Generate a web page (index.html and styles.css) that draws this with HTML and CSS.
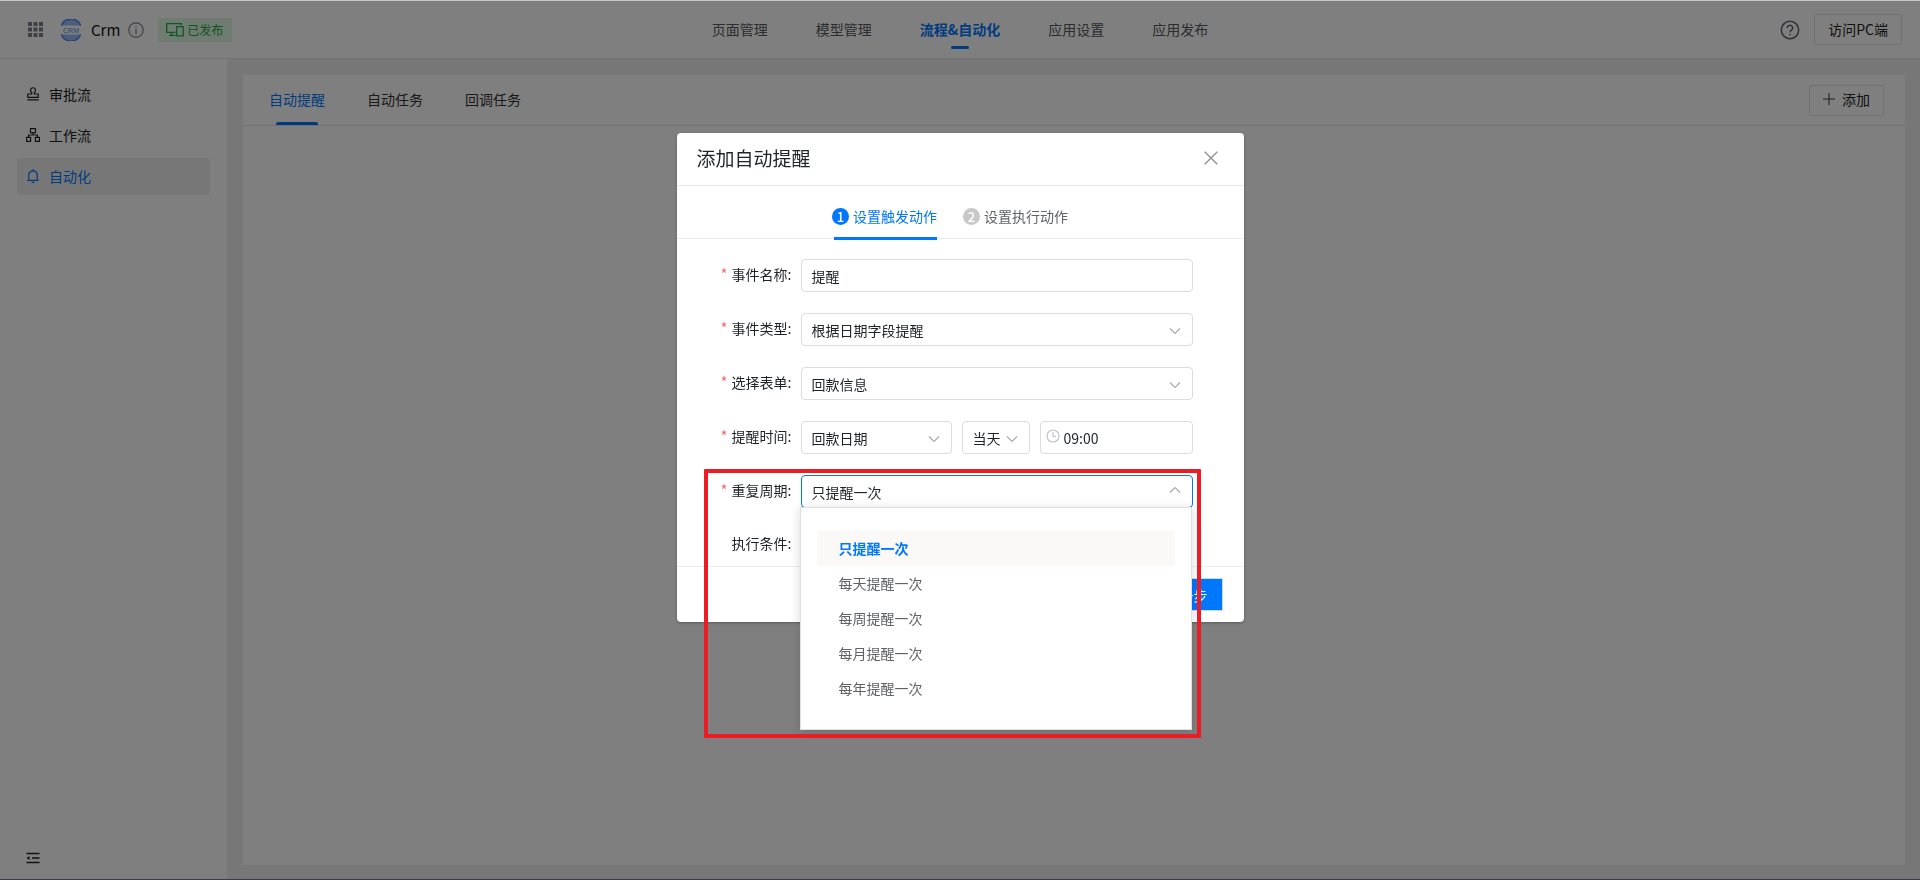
FILE: index.html
```html
<!DOCTYPE html>
<html lang="zh-CN">
<head>
<meta charset="utf-8">
<title>Crm</title>
<link rel="stylesheet" href="styles.css">
</head>
<body>
<div class="app">
  <header class="topbar">
    <div class="topbar-left">
      <button class="icon-btn apps" aria-label="应用">
        <svg width="15" height="15" viewBox="0 0 15 15" fill="#7b818c"><path d="M0 0h4v4H0zM5.500 0h4v4h-4zM11 0h4v4h-4zM0 5.500h4v4H0zM5.500 5.500h4v4h-4zM11 5.500h4v4h-4zM0 11h4v4H0zM5.500 11h4v4h-4zM11 11h4v4h-4z"/></svg>
      </button>
      <svg class="logo" width="22" height="22" viewBox="0 0 22 22"><path d="M1.500 6.500a10.500 10.500 0 0 1 19 0zM1.500 15.500a10.500 10.500 0 0 0 19 0z" fill="#9dbcf5"/><path d="M1.300 6.500a10.500 10.500 0 0 1 19.400 0M1.300 15.500a10.500 10.500 0 0 0 19.400 0" fill="none" stroke="#4a86ee" stroke-width="1.500"/><text class="logo-text" x="11" y="13.500" text-anchor="middle">CRM</text></svg>
      <span class="app-name">Crm</span>
      <svg class="info" width="16" height="16" viewBox="0 0 16 16" fill="none" stroke="#7a7f88" stroke-width="1.200"><circle cx="8" cy="8" r="7.200"/><path d="M8 7v5M8 4.200v1.300"/></svg>
      <span class="badge">
        <svg width="18" height="14" viewBox="0 0 18 14" fill="none" stroke="#1fb046" stroke-width="1.300"><path d="M9.500 9.300H.7V.7h14.600v1.800M5.500 9.500v2.800M3 12.400h6.500M10.700 3.700h6.500v9.200h-6.500z"/></svg>已发布
      </span>
    </div>
    <nav class="main-nav">
      <a href="#">页面管理</a>
      <a href="#">模型管理</a>
      <a href="#" class="active">流程&amp;自动化</a>
      <a href="#">应用设置</a>
      <a href="#">应用发布</a>
    </nav>
    <div class="topbar-right">
      <button class="icon-btn" aria-label="帮助">
        <svg width="20" height="20" viewBox="0 0 20 20" fill="none" stroke="#5f646d" stroke-width="1.500"><circle cx="10" cy="10" r="8.700"/><path d="M7.300 8a2.700 2.700 0 1 1 4.200 2.200C10.400 10.900 10 11.200 10 12.300M10 13.700v1.500"/></svg>
      </button>
      <button class="btn">访问PC端</button>
    </div>
  </header>
  <div class="body">
    <aside class="sidebar">
      <nav class="side-nav">
        <a href="#"><svg width="14" height="14" viewBox="0 0 14 14" fill="none" stroke="#222" stroke-width="1.200"><path d="M5.700 7V5.400a2.500 2.500 0 1 1 2.600 0V7h3.900v3.300H1.800V7zM1.300 12.900h11.400"/></svg>审批流</a>
        <a href="#"><svg width="14" height="14" viewBox="0 0 14 14" fill="none" stroke="#222" stroke-width="1.200"><path d="M4.500.6h5v4h-5zM.6 9.400h4v4h-4zM9.400 9.400h4v4h-4zM7 4.600V7M2.600 9.400V7h8.800v2.400"/></svg>工作流</a>
        <a href="#" class="active"><svg width="14" height="14" viewBox="0 0 14 14" fill="none" stroke="#0077ff" stroke-width="1.200"><path d="M1.300 11.400h11.400M2.800 11.400V6a4.200 4.200 0 0 1 8.400 0v5.400M7 .3v1.500M5.600 13.300h2.800"/></svg>自动化</a>
      </nav>
      <button class="icon-btn collapse" aria-label="收起">
        <svg width="14" height="12" viewBox="0 0 14 12" fill="none" stroke="#222" stroke-width="1.300"><path d="M.5 1.500h13M6 6h7.500M.5 10.500h13"/><path d="M.5 6l3-2v4z" fill="#222" stroke="none"/></svg>
      </button>
    </aside>
    <main class="panel">
      <div class="panel-head">
        <nav class="tabs">
          <a href="#" class="active">自动提醒</a>
          <a href="#">自动任务</a>
          <a href="#">回调任务</a>
        </nav>
        <button class="btn add"><svg width="12" height="12" viewBox="0 0 12 12" stroke="#444" stroke-width="1.100"><path d="M6 0v12M0 6h12"/></svg>添加</button>
      </div>
    </main>
  </div>
</div>
<div class="mask">
  <section class="modal" role="dialog" aria-labelledby="dlg-title">
    <header class="modal-head">
      <h2 id="dlg-title">添加自动提醒</h2>
      <button class="icon-btn" aria-label="关闭"><svg width="14" height="14" viewBox="0 0 14 14" stroke="#8c8c8c" stroke-width="1.300"><path d="M.7.7l12.600 12.600M13.300.7L.7 13.300"/></svg></button>
    </header>
    <ol class="steps">
      <li class="step current"><span class="num">1</span>设置触发动作</li>
      <li class="step"><span class="num">2</span>设置执行动作</li>
    </ol>
    <form class="form">
      <label class="label required" for="f-name">事件名称:</label>
      <input class="field" id="f-name" type="text" value="提醒">

      <label class="label required" for="f-type">事件类型:</label>
      <div class="select"><select class="field" id="f-type"><option>根据日期字段提醒</option></select><svg class="chev" width="12" height="8" viewBox="0 0 12 8"><path d="M1 1.500l5 5 5-5"/></svg></div>

      <label class="label required" for="f-form">选择表单:</label>
      <div class="select"><select class="field" id="f-form"><option>回款信息</option></select><svg class="chev" width="12" height="8" viewBox="0 0 12 8"><path d="M1 1.500l5 5 5-5"/></svg></div>

      <label class="label required" for="f-date">提醒时间:</label>
      <div class="group">
        <div class="select"><select class="field" id="f-date"><option>回款日期</option></select><svg class="chev" width="12" height="8" viewBox="0 0 12 8"><path d="M1 1.500l5 5 5-5"/></svg></div>
        <div class="select small"><select class="field" aria-label="提前天数"><option>当天</option></select><svg class="chev" width="12" height="8" viewBox="0 0 12 8"><path d="M1 1.500l5 5 5-5"/></svg></div>
        <div class="select time"><svg class="clock" width="14" height="14" viewBox="0 0 14 14"><circle cx="7" cy="7" r="6"/><path d="M7 3v4.300h3.300"/></svg><input class="field" type="text" value="09:00" aria-label="时间"></div>
      </div>

      <label class="label required" for="f-cycle">重复周期:</label>
      <div class="select open">
        <select class="field" id="f-cycle"><option>只提醒一次</option></select><svg class="chev" width="12" height="8" viewBox="0 0 12 8"><path d="M1 6.500l5-5 5 5"/></svg>
        <ul class="dropdown" role="listbox" aria-label="重复周期">
          <li role="option" aria-selected="true">只提醒一次</li>
          <li role="option">每天提醒一次</li>
          <li role="option">每周提醒一次</li>
          <li role="option">每月提醒一次</li>
          <li role="option">每年提醒一次</li>
        </ul>
      </div>

      <span class="label">执行条件:</span>
    </form>
    <footer class="modal-foot"><button class="primary">下一步</button></footer>
    <div class="highlight"></div>
  </section>
</div>
</body>
</html>
```

FILE: styles.css
```css
* { box-sizing: border-box; }

body {
  margin: 0;
  font-family: "Noto Sans CJK SC", "Noto Sans", sans-serif;
  font-size: 14px;
  line-height: 20px;
  color: #1f2329;
}

a { color: inherit; text-decoration: none; }

button, input, select { font: inherit; color: inherit; }

svg { display: block; flex: none; }

.icon-btn {
  display: flex;
  padding: 0;
  border: 0;
  background: none;
}

.app {
  display: flex;
  flex-direction: column;
  height: 100vh;
  border-top: 1px solid #c8c8c8;
  border-bottom: 1px solid #3c3c50;
}

.topbar {
  display: grid;
  grid-template-columns: 1fr auto 1fr;
  align-items: center;
  height: 58px;
  padding: 0 18px 0 28px;
  border-bottom: 1px solid #e4e4e4;
  background: #fff;
}

.topbar-left, .topbar-right { display: flex; align-items: center; }
.topbar-right { justify-content: flex-end; gap: 14px; }

.logo { margin: 0 9px 0 17px; }
.logo-text { font: 7px "Liberation Sans", sans-serif; fill: #4a86ee; }
.app-name { font-size: 15px; color: #111; }
.info { margin: 0 14px 0 8px; }

.badge {
  display: flex;
  align-items: center;
  gap: 3px;
  height: 24px;
  padding: 0 9px 0 8px;
  background: #e0f7e5;
  color: #1fa842;
  font-size: 12px;
}

.main-nav { display: flex; gap: 48px; margin-right: 10px; color: #55585e; }
.main-nav a { position: relative; line-height: 57px; }
.main-nav .active { color: #0077ff; font-weight: 700; }
.main-nav .active::after {
  content: "";
  position: absolute;
  left: calc(50% - 9px);
  bottom: 9px;
  width: 18px;
  height: 3px;
  border-radius: 2px;
  background: #0077ff;
}

.btn {
  height: 31px;
  padding: 0 13px 2px;
  border: 1px solid #e0e0e0;
  border-radius: 2px;
  background: #fff;
  color: #222;
}

.add { display: flex; align-items: center; gap: 7px; }

.body { display: flex; flex: 1; min-height: 0; background: #eee; }

.sidebar {
  display: flex;
  flex-direction: column;
  justify-content: space-between;
  width: 227px;
  padding: 17px 17px 15px;
  background: #fff;
}

.side-nav { display: flex; flex-direction: column; gap: 4px; color: #222; }
.side-nav a {
  display: flex;
  align-items: center;
  gap: 9px;
  height: 37px;
  padding: 0 0 2px 9px;
  border-radius: 3px;
}
.side-nav .active { background: #eee; color: #0077ff; }
.collapse { padding-left: 9px; }

.panel { flex: 1; margin: 16px 15px 14px 16px; background: #fff; }

.panel-head {
  display: flex;
  align-items: center;
  justify-content: space-between;
  padding: 0 21px 0 26px;
  border-bottom: 1px solid #e0e0e0;
}

.tabs { display: flex; gap: 42px; color: #333; }
.tabs a { position: relative; padding-bottom: 2px; line-height: 48px; }
.tabs .active { color: #0077ff; }
.tabs .active::after {
  content: "";
  position: absolute;
  left: calc(50% - 21px);
  bottom: 0;
  width: 42px;
  height: 3px;
  border-radius: 2px 2px 0 0;
  background: #0077ff;
}

.mask {
  position: fixed;
  inset: 1px 0;
  display: flex;
  justify-content: center;
  align-items: flex-start;
  padding-top: 132px;
  background: rgba(0, 0, 0, 0.5);
}

.modal {
  position: relative;
  width: 567px;
  border-radius: 4px;
  background: #fff;
  box-shadow: 0 1px 3px rgba(0, 0, 0, 0.3);
}

.modal-head {
  display: flex;
  align-items: center;
  justify-content: space-between;
  height: 53px;
  padding: 0 26px 2px 20px;
  border-bottom: 1px solid #e4e7ed;
}
.modal-head h2 { margin: 0; font-size: 19px; font-weight: 400; }

.steps {
  display: flex;
  justify-content: center;
  gap: 26px;
  height: 53px;
  margin: 0;
  padding: 0 20px 0 0;
  border-bottom: 1px solid #ececec;
  list-style: none;
}
.step {
  position: relative;
  display: flex;
  align-items: center;
  gap: 4px;
  padding-top: 8px;
  color: #606266;
}
.num {
  width: 17px;
  border-radius: 9px;
  background: #c8c8c8;
  color: #fff;
  font-size: 13px;
  font-weight: 500;
  line-height: 17px;
  text-align: center;
}
.current { color: #0077ff; }
.current .num { background: #0077ff; }
.current::after {
  content: "";
  position: absolute;
  left: 2px;
  right: 0;
  bottom: -2px;
  height: 3px;
  background: #0077ff;
}

.form {
  display: grid;
  grid-template-columns: 115px 392px;
  column-gap: 9px;
  row-gap: 21px;
  padding: 20px 0 4px;
}

.label { height: 33px; line-height: 29px; text-align: right; }
.required::before { content: "*"; margin-right: 4px; color: #f56c6c; font-size: 15px; }

.field {
  width: 100%;
  height: 33px;
  padding: 0 10px;
  border: 1px solid #dcdcdc;
  border-radius: 4px;
  outline: 0;
  background: #fff;
  appearance: none;
}

.group { display: grid; grid-template-columns: 151px 68px 1fr; column-gap: 10px; }
.select { position: relative; }
.chev {
  position: absolute;
  top: 14px;
  right: 12px;
  fill: none;
  stroke: #a8abb2;
  stroke-width: 1.2;
}
.open .chev { top: 11px; }
.open .field { border-color: #0077ff; }
.time .field { padding-left: 23px; }
.clock {
  position: absolute;
  top: 8px;
  left: 6px;
  fill: none;
  stroke: #c0c4cc;
  stroke-width: 1.2;
}

.dropdown {
  position: absolute;
  z-index: 2;
  top: 32px;
  left: -1px;
  width: 100%;
  margin: 0;
  padding: 23px 16px;
  border: 1px solid #dfdfdf;
  background: #fff;
  box-shadow: 0 2px 10px rgba(0, 0, 0, 0.15);
  color: #606266;
  list-style: none;
}
.dropdown li { padding-left: 22px; line-height: 35px; }
.dropdown [aria-selected="true"] { background: #faf9f8; color: #0077ff; font-weight: 700; }

.modal-foot {
  display: flex;
  justify-content: flex-end;
  padding: 11px 21px 11px;
  border-top: 1px solid #ececec;
}
.primary {
  height: 33px;
  padding: 0 14px;
  border: 1px solid #c6dcf7;
  background: #0077ff;
  color: #fff;
}

.highlight {
  position: absolute;
  z-index: 3;
  top: 336px;
  left: 27px;
  width: 497px;
  height: 269px;
  border: 4px solid #ed1c24;
  border-radius: 1px;
  pointer-events: none;
}
```
